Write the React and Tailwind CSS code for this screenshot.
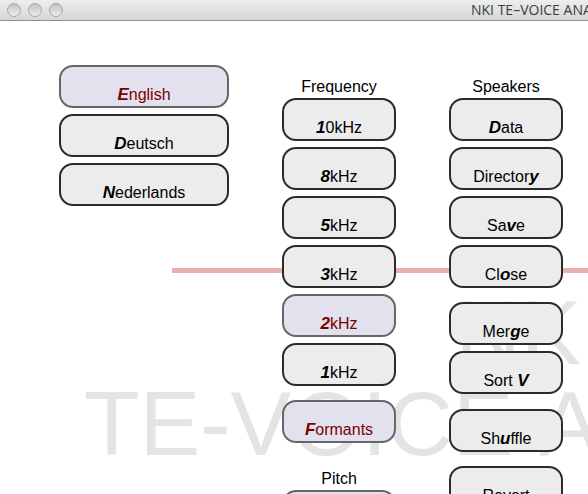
const buttonBase =
  "flex h-[43px] w-full shrink-0 items-end justify-center rounded-[14px] border-2 pb-px text-base leading-5 whitespace-pre";

function Key({ before = "", hot, after = "", active = false, space = "mt-1.5" }) {
  return (
    <button
      type="button"
      aria-pressed={active}
      className={`${buttonBase} ${space} ${
        active
          ? "border-[#666666] bg-[#e2e2ef] text-[#7d0000]"
          : "border-[#2b2b2b] bg-[#ececec] text-black"
      }`}
    >
      <span>
        {before}
        {hot && <b className="text-[17px] leading-5 italic">{hot}</b>}
        {after}
      </span>
    </button>
  );
}

function Heading({ children, space = "" }) {
  return <h2 className={`text-center text-base leading-5 ${space}`}>{children}</h2>;
}

function TitleBar() {
  return (
    <header className="flex h-[21px] items-center border-b border-[#8f8f8f] bg-linear-to-b from-[#eeeeee] to-[#d6d6d6] pl-[7px]">
      <div className="flex gap-[7px]">
        {[0, 1, 2].map((n) => (
          <span
            key={n}
            className="size-[14px] rounded-full border border-[#a8a8a8] bg-linear-to-b from-[#c2c2c2] to-[#eeeeee]"
          />
        ))}
      </div>
      <div className="ml-auto w-[117px] overflow-hidden font-['Open_Sans','Noto_Sans',sans-serif] text-[14px] leading-5 whitespace-nowrap text-[#3c3c3c]">
        NKI TE–VOICE ANALYSIS
      </div>
    </header>
  );
}

function Backdrop() {
  return (
    <div aria-hidden="true" className="absolute inset-0 overflow-hidden">
      <div className="mt-[247px] ml-[172px] h-[5px] bg-[#e6b0b0]" />
      <div className="ml-[84px] w-[894px] pt-3.5 text-center text-[91px] leading-[91px] whitespace-nowrap text-[#e4e4e4] [font-kerning:none]">
        <div>NKI</div>
        <div>TE-VOICE ANALYSIS</div>
      </div>
    </div>
  );
}

export default function App() {
  return (
    <div className="flex h-screen flex-col overflow-hidden bg-white font-['Liberation_Sans',Arial,sans-serif] text-black">
      <TitleBar />
      <main className="relative min-h-0 flex-1 overflow-hidden">
        <Backdrop />
        <div className="relative flex items-start pl-[59px]">
          <section className="flex w-[170px] flex-col pt-[38px]">
            <Key hot="E" after="nglish" active />
            <Key hot="D" after="eutsch" />
            <Key hot="N" after="ederlands" />
          </section>
          <section className="ml-[53px] flex w-[114px] flex-col pt-14">
            <Heading>Frequency</Heading>
            <Key hot="1" after="0kHz" space="mt-px" />
            <Key hot="8" after="kHz" />
            <Key hot="5" after="kHz" />
            <Key hot="3" after="kHz" />
            <Key hot="2" after="kHz" active />
            <Key hot="1" after="kHz" />
            <Key hot="F" after="ormants" active space="mt-3.5" />
            <Heading space="mt-[26px]">Pitch</Heading>
            <Key active space="mt-px" />
          </section>
          <section className="ml-[53px] flex w-[114px] flex-col pt-14">
            <Heading>Speakers</Heading>
            <Key hot="D" after="ata" space="mt-px" />
            <Key before="Director" hot="y" />
            <Key before="Sa" hot="v" after="e" />
            <Key before="Cl" hot="o" after="se" />
            <Key before="Mer" hot="g" after="e" space="mt-3.5" />
            <Key before="Sort " hot="V" />
            <Key before="Sh" hot="u" after="ffle" space="mt-[15px]" />
            <Key before="Revert" space="mt-3.5" />
          </section>
        </div>
      </main>
    </div>
  );
}
